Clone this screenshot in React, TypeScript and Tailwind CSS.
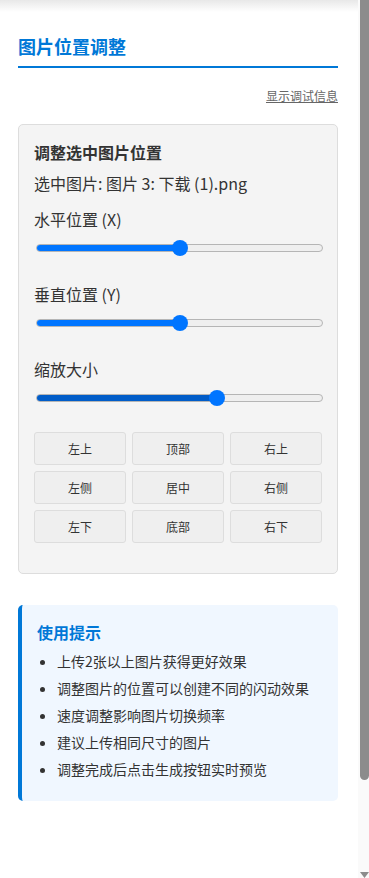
import React from "react";

const sliders = [
  { label: "水平位置 (X)", value: 0.5, fill: "bg-[#0075ff]" },
  { label: "垂直位置 (Y)", value: 0.5, fill: "bg-[#0075ff]" },
  { label: "缩放大小", value: 0.637, fill: "bg-[#005cc8]" },
];

const positions = ["左上", "顶部", "右上", "左侧", "居中", "右侧", "左下", "底部", "右下"];

const tips = [
  "上传2张以上图片获得更好效果",
  "调整图片的位置可以创建不同的闪动效果",
  "速度调整影响图片切换频率",
  "建议上传相同尺寸的图片",
  "调整完成后点击生成按钮实时预览",
];

function Slider({ value, fill }: { value: number; fill: string }) {
  return (
    <div className="relative -mr-px ml-[2px] flex h-4 items-center">
      <div className="relative h-[8px] w-full overflow-hidden rounded-full border border-[#b5b5b5] bg-[#efefef]">
        <div
          className={`absolute -left-px -top-px h-[8px] rounded-l-full ${fill}`}
          style={{ width: `calc(${value} * (100% - 16px) + 9px)` }}
        />
      </div>
      <div
        className="absolute top-0 h-4 w-4 rounded-full bg-[#0075ff]"
        style={{ left: `calc(${value} * (100% - 16px))` }}
      />
    </div>
  );
}

export default function App() {
  return (
    <div className="flex h-[878px] overflow-hidden bg-white font-['Noto_Sans_CJK_SC','Noto_Sans',sans-serif] text-[#333]">
      <div className="min-w-0 flex-1">
        <div className="h-3 bg-gradient-to-b from-[#e8e8e8] to-white" />
        <div className="pl-[18px] pr-[20px]">
          <h2 className="mt-[21px] border-b-2 border-[#0078d7] pb-[6px] text-[18px] font-bold leading-[27px] text-[#0078d7]">
            图片位置调整
          </h2>

          <div className="mt-[19px] text-right text-[12px] leading-[18px]">
            <span className="cursor-pointer text-[#666] underline">显示调试信息</span>
          </div>

          {/* Position card */}
          <div className="mt-[19px] rounded-[5px] border border-[#dddddd] bg-[#f4f4f4] p-[15px]">
            <h3 className="text-base font-bold leading-6 text-[#333]">调整选中图片位置</h3>
            <p className="mt-[7px] text-base leading-6">选中图片: 图片 3: 下载 (1).png</p>

            <div className="mt-[12px]">
              {sliders.map((s) => (
                <div key={s.label} className="mb-[26px]">
                  <div className="mb-[9px] text-base leading-6">{s.label}</div>
                  <Slider value={s.value} fill={s.fill} />
                </div>
              ))}
            </div>

            <div className="mb-[15px] grid grid-cols-3 gap-[6px]">
              {positions.map((p) => (
                <button
                  key={p}
                  className="h-[33px] rounded-[3px] border border-[#dddddd] bg-[#efefef] text-[12px] text-[#333]"
                >
                  {p}
                </button>
              ))}
            </div>
          </div>

          {/* Tips */}
          <div className="mt-[31px] rounded-[5px] border-l-4 border-[#0078d7] bg-[#f0f7ff] p-[15px]">
            <h4 className="text-base font-bold leading-6 text-[#0078d7]">使用提示</h4>
            <ul className="mt-[7px] list-disc pl-[20px] text-[14px]">
              {tips.map((t) => (
                <li key={t} className="mb-[6px] leading-[21px]">
                  {t}
                </li>
              ))}
            </ul>
          </div>
        </div>
      </div>

      {/* Scrollbar */}
      <div className="flex w-[11px] flex-col bg-[#fafafa] pl-[2px]">
        <div className="h-[780px] w-[9px] rounded-b-[5px] bg-[#8c8c8c]" />
        <div className="flex-1" />
        <svg width="9" height="6" viewBox="0 0 9 6">
          <polygon points="0,0 9,0 4.5,6" fill="#8c8c8c" />
        </svg>
      </div>
    </div>
  );
}
